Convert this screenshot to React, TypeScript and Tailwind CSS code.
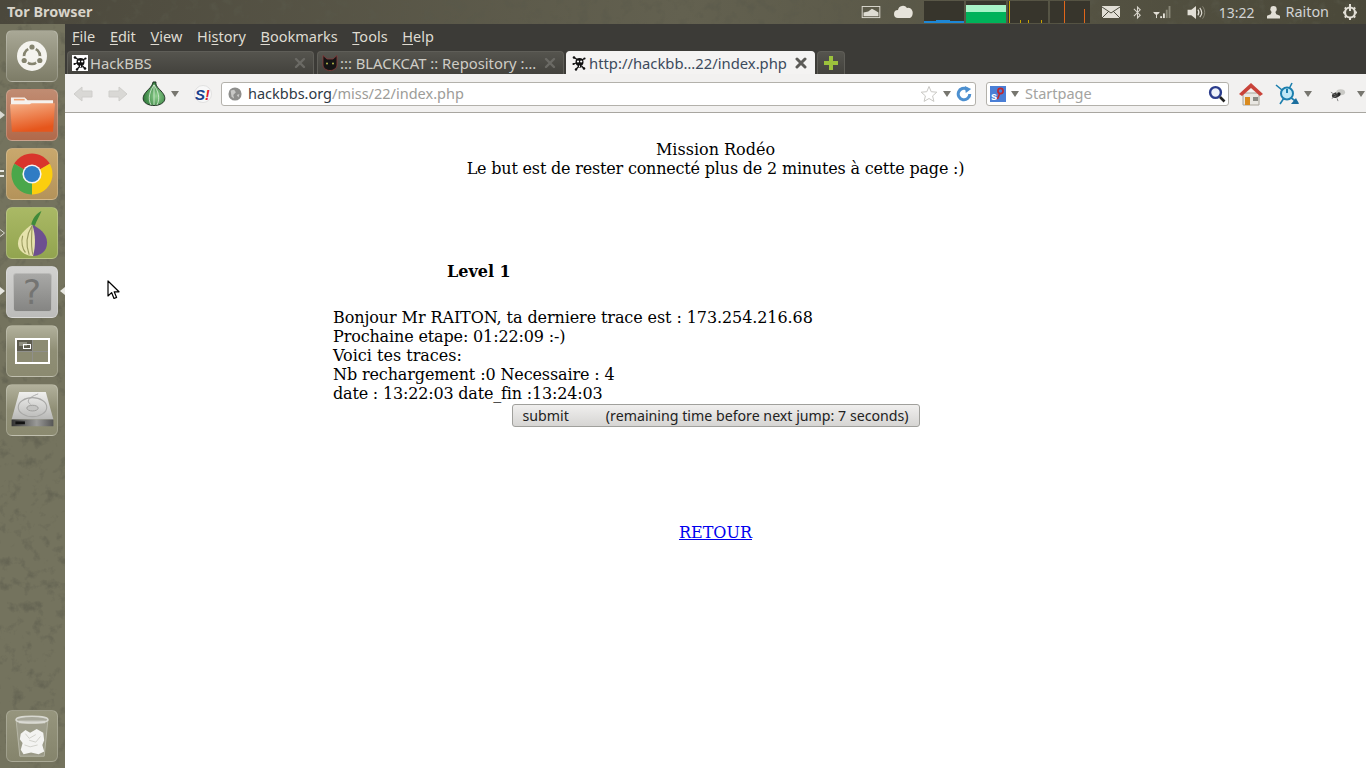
// App.tsx
// Ubuntu Unity desktop with Tor Browser open on a hackbbs mission page.

function Skull({ className = "", plain = false }: { className?: string; plain?: boolean }) {
  return (
    <svg viewBox="0 0 16 16" className={className}>
      {!plain && <rect width="16" height="16" fill="#fff" />}
      <g fill="#111">
        <circle cx="8.5" cy="7" r="4" />
        <rect x="6.8" y="10" width="3.6" height="2.6" />
        <circle cx="3" cy="2.5" r="1.3" />
        <circle cx="13.5" cy="3.5" r="1.1" />
        <circle cx="2.5" cy="9" r="1.1" />
        <circle cx="5" cy="14.5" r="1.2" />
        <circle cx="13" cy="13.5" r="1.3" />
        <path d="M3 2.5L7 5M13.5 3.5L11 5M2.5 9L5 8M5 14.5L7 12M13 13.5L10.5 11" stroke="#111" strokeWidth="1.3" />
      </g>
      <circle cx="7" cy="6.5" r="1.1" fill="#fff" />
      <circle cx="10.2" cy="6.5" r="1.1" fill="#fff" />
      <rect x="8" y="10.5" width="1" height="1.6" fill="#fff" />
    </svg>
  );
}

function CatIcon() {
  return (
    <svg viewBox="0 0 16 16" className="w-[16px] h-[16px] shrink-0">
      <path d="M1 .5L5 4H11L15 .5V10C15 13 12 15.5 8 15.5S1 13 1 10Z" fill="#151515" stroke="#8a3a3a" strokeWidth=".8" />
      <circle cx="5" cy="8.5" r="1" fill="#b5b84a" />
      <circle cx="11" cy="8.5" r="1" fill="#b5b84a" />
    </svg>
  );
}

function Close({ active = false }: { active?: boolean }) {
  return (
    <svg viewBox="0 0 12 12" className="w-[12px] h-[12px] shrink-0">
      <path
        d="M2 2L10 10M10 2L2 10"
        stroke={active ? "#5c5b57" : "#6b6a65"}
        strokeWidth={active ? 3 : 2.4}
        strokeLinecap="round"
      />
    </svg>
  );
}

function Caret({ color = "#77766f" }: { color?: string }) {
  return (
    <svg viewBox="0 0 8 6" className="w-[8px] h-[6px] shrink-0">
      <path d="M0 0H8L4 6Z" fill={color} />
    </svg>
  );
}

function Tab({
  width,
  active = false,
  label,
  icon,
}: {
  width: string;
  active?: boolean;
  label: string;
  icon: React.ReactNode;
}) {
  return (
    <div
      className={`${width} h-[23px] flex items-center gap-[2px] pl-[4px] pr-[7px] rounded-t-[4px] border border-b-0 text-[14.8px] ${
        active
          ? "bg-[#f4f3f2] border-[#f4f3f2] text-[#3c4a5c]"
          : "bg-gradient-to-b from-[#55544e] to-[#43423d] border-[#5f5e58] text-[#cfcdc6]"
      }`}
    >
      {icon}
      <span className="flex-1 truncate whitespace-nowrap">{label}</span>
      <Close active={active} />
    </div>
  );
}

function Tile({ className, children }: { className: string; children: React.ReactNode }) {
  return (
    <div className={`relative w-[52px] h-[52px] ml-[6px] rounded-[6px] flex items-center justify-center border border-white/20 ${className}`}>
      {children}
    </div>
  );
}

// speckled wallpaper showing through the launcher and the panel
function Grain({ id }: { id: string }) {
  return (
    <svg className="absolute inset-0 w-full h-full pointer-events-none">
      <filter id={id}>
        <feTurbulence type="fractalNoise" baseFrequency="0.09" numOctaves="4" seed="4" />
        <feColorMatrix values="0 0 0 0 0.1  0 0 0 0 0.1  0 0 0 0 0.07  0 0 0 3.2 -1.7" />
      </filter>
      <rect width="100%" height="100%" filter={`url(#${id})`} opacity="0.55" />
    </svg>
  );
}

function Launcher() {
  return (
    <div className="w-[65px] shrink-0 flex flex-col gap-[7px] pt-[6px] pb-[6px] bg-[#74735e] relative">
      <Grain id="launcher-grain" />
      <Tile className="bg-gradient-to-b from-[#a9a896] to-[#7d7c67]">
        <svg viewBox="0 0 30 30" className="w-[30px] h-[30px]">
          <circle cx="15" cy="15" r="15" fill="#f4f3ee" />
          <circle cx="15" cy="15" r="8" fill="none" stroke="#85846f" strokeWidth="2.6" />
          <circle cx="15" cy="6" r="4.4" fill="#f4f3ee" />
          <circle cx="7.2" cy="19.5" r="4.4" fill="#f4f3ee" />
          <circle cx="22.8" cy="19.5" r="4.4" fill="#f4f3ee" />
          <circle cx="15" cy="6" r="2.6" fill="#85846f" />
          <circle cx="7.2" cy="19.5" r="2.6" fill="#85846f" />
          <circle cx="22.8" cy="19.5" r="2.6" fill="#85846f" />
        </svg>
      </Tile>
      <Tile className="bg-gradient-to-b from-[#c08c72] to-[#b1694a]">
        <svg viewBox="0 0 46 38" className="w-[45px] h-[38px]">
          <defs>
            <linearGradient id="folder-front" x1="0" y1="0" x2="0.3" y2="1">
              <stop offset="0" stopColor="#f5b188" />
              <stop offset="1" stopColor="#e6561c" />
            </linearGradient>
          </defs>
          <path d="M1 1H15L18 4H44V12H1Z" fill="#f5f2ee" />
          <rect x="4" y="2.5" width="11" height="1.6" fill="#eda070" />
          <path d="M0 8H20L22 7H46L44 36H2Z" fill="url(#folder-front)" />
        </svg>
      </Tile>
      <Tile className="bg-gradient-to-b from-[#c9a86d] to-[#b4935a]">
        <svg viewBox="0 0 42 42" className="w-[42px] h-[42px]">
          <path d="M21 21L3.25 10.75A20.5 20.5 0 0 1 38.75 10.75Z" fill="#d9352c" />
          <path d="M21 21L38.75 10.75A20.5 20.5 0 0 1 21 41.5Z" fill="#fbce0e" />
          <path d="M21 21L21 41.5A20.5 20.5 0 0 1 3.25 10.75Z" fill="#4aa74a" />
          <circle cx="21" cy="21" r="9.6" fill="#f4f4f4" />
          <circle cx="21" cy="21" r="8" fill="#2f7cc4" />
        </svg>
      </Tile>
      <Tile className="bg-gradient-to-b from-[#aab965] to-[#92a44f]">
        <svg viewBox="3 1 33 42" preserveAspectRatio="none" className="w-[31px] h-[47px]">
          <path d="M18 15C19 9 24 4 29 2C27 7 24 10 22 15Z" fill="#3f8a3a" />
          <path d="M19 14C26 17 35 22 35 30C35 38 28 42 20 42Z" fill="#6d4f90" />
          <path d="M19 14C12 18 4 24 4 31C4 38 12 42 20 42C23 34 23 22 19 14Z" fill="#e6e3ac" />
          <path d="M19 15C14 22 11 30 16 41M19 15C19 24 17 32 20 41M9 24C7 30 9 36 12 39" fill="none" stroke="#9a9a5e" strokeWidth="1.2" />
        </svg>
      </Tile>
      <Tile className="bg-gradient-to-b from-[#d2d2d0] to-[#bcbcba]">
        <div className="w-[39px] h-[39px] rounded-[3px] bg-gradient-to-b from-[#a8a8a6] to-[#858583] border border-[#bbbbb9] flex items-center justify-center text-[34px] text-[#747472] [font-family:'DejaVu_Sans',sans-serif]">
          ?
        </div>
      </Tile>
      <Tile className="bg-gradient-to-b from-[#b2b19c] via-[#8f8e75] to-[#8b8a70]">
        <div className="w-[35px] h-[26px] border-[2px] border-white grid grid-cols-2 grid-rows-2 gap-px bg-[#8f8f8a]">
          <div className="bg-[#5e5c4f] relative">
            <div className="absolute left-[2px] top-[2px] w-[8px] h-[4px] bg-[#8f8e80]" />
            <div className="absolute left-[6px] top-[4px] w-[8px] h-[5px] border border-white" />
          </div>
          <div className="bg-[#8c8b72]" />
          <div className="bg-[#8c8b72]" />
          <div className="bg-[#8c8b72]" />
        </div>
      </Tile>
      <Tile className="bg-gradient-to-b from-[#b2b19c] via-[#8f8e75] to-[#8b8a70]">
        <svg viewBox="0 0 48 40" className="w-[47px] h-[38px]">
          <defs>
            <linearGradient id="disk-top" x1="0" y1="0" x2="0" y2="1">
              <stop offset="0" stopColor="#f0f0ee" />
              <stop offset="1" stopColor="#b8b8b6" />
            </linearGradient>
            <linearGradient id="disk-front" x1="0" y1="0" x2="1" y2="0">
              <stop offset="0" stopColor="#333" />
              <stop offset="0.6" stopColor="#9a9a98" />
              <stop offset="1" stopColor="#555" />
            </linearGradient>
          </defs>
          <path d="M10 1H38L46 30H2Z" fill="url(#disk-top)" />
          <path d="M2 30H46V37H2Z" fill="url(#disk-front)" />
          <rect x="6" y="32" width="10" height="3" fill="#111" />
          <ellipse cx="24" cy="17" rx="15" ry="10" fill="none" stroke="#a8a8a6" strokeWidth="1.2" />
          <ellipse cx="24" cy="18" rx="6" ry="3" fill="#c4c4c2" stroke="#9c9c9a" />
          <path d="M30 3C22 6 16 10 22 14" fill="none" stroke="#a8a8a6" />
        </svg>
      </Tile>
      <Tile className="mt-auto bg-gradient-to-b from-[#96957d] to-[#85846c]">
        <svg viewBox="0 0 40 48" className="w-[38px] h-[45px]">
          <path d="M3 6L7 45H33L37 6Z" fill="#a6a698" fillOpacity=".6" stroke="#b8b7a8" />
          <ellipse cx="20" cy="6" rx="17" ry="3.6" fill="#a8a89a" stroke="#d8d8d0" strokeWidth="1.6" />
          <rect x="6" y="7" width="28" height="3" fill="#dcdcd6" fillOpacity=".7" />
          <path d="M8 21L13 17L18 20L25 16L32 20L33 28L31 33L33 40L27 43L19 41L11 43L8 38L10 31L7 27Z" fill="#f3f3f1" />
          <path d="M13 21L17 26L24 22M29 24L24 30L17 28M12 33L18 35L26 33" fill="none" stroke="#cfcfc9" />
        </svg>
      </Tile>
      {/* running-app pips */}
      <div className="absolute left-0 top-[87px] w-0 h-0 border-y-[4px] border-y-transparent border-l-[5px] border-l-[#d9d9d2]" />
      <div className="absolute left-0 top-[146px] w-[4px] h-[2px] bg-[#e6e6e0]" />
      <div className="absolute left-0 top-[151px] w-[4px] h-[2px] bg-[#e6e6e0]" />
      <svg viewBox="0 0 5 8" className="absolute left-0 top-[205px] w-[5px] h-[8px]">
        <path d="M0 .5L4.5 4L0 7.5" fill="none" stroke="#d9d9d2" />
      </svg>
      <div className="absolute left-0 top-[263px] w-0 h-0 border-y-[4px] border-y-transparent border-l-[5px] border-l-[#e6e6e0]" />
      <div className="absolute right-0 top-[263px] w-0 h-0 border-y-[4px] border-y-transparent border-r-[5px] border-r-[#e6e6e0]" />
    </div>
  );
}

function Graph({ children, className = "" }: { children: React.ReactNode; className?: string }) {
  return <div className={`w-[40px] h-[22px] bg-[#37352c] relative overflow-hidden ${className}`}>{children}</div>;
}

function TopBar() {
  return (
    <div className="relative h-[24px] shrink-0 flex items-center pl-[7px] pr-[8px] bg-gradient-to-r from-[#4b483c] via-[#636150] to-[#4a4839] text-[#dfdbd2] text-[14px]">
      <Grain id="panel-grain" />
      <span className="relative font-bold text-[14.4px] text-[#d8d4ca]">Tor Browser</span>
      <div className="relative ml-auto flex items-center">
        <svg viewBox="0 0 20 14" className="w-[20px] h-[13px] mr-[13px]">
          <rect x=".5" y=".5" width="19" height="12" fill="none" stroke="#dedcd3" />
          <path d="M2 7L7 6L11 3L15 5L18 7V11H2Z" fill="#dedcd3" />
        </svg>
        <svg viewBox="0 0 20 14" className="w-[20px] h-[14px] mr-[10px]">
          <path d="M4 13A4 4 0 0 1 4 5A5 5 0 0 1 13 3A4 5 0 0 1 16 13Z" fill="#e6e3da" />
        </svg>
        <Graph className="mr-[2px]">
          <div className="absolute left-0 right-0 bottom-0 h-[2px] bg-[#1d87d6]" />
          <div className="absolute left-[12px] bottom-[2px] h-px w-[14px] bg-[#1d87d6]" />
        </Graph>
        <div className="w-[40px] h-[22px] bg-[#00b25a] relative mr-[2px]">
          <div className="absolute left-0 right-0 top-0 h-[4px] bg-[#37352c]" />
          <div className="absolute left-0 right-0 top-[4px] h-[7px] bg-[#a8f3c7]" />
        </div>
        <Graph className="mr-[2px]">
          <div className="absolute left-[1px] top-0 bottom-0 w-px bg-[#c9a400]" />
          <div className="absolute left-[12px] bottom-0 h-[3px] w-px bg-[#c9a400]" />
          <div className="absolute left-[20px] bottom-0 h-[3px] w-px bg-[#c9a400]" />
          <div className="absolute left-[33px] bottom-0 h-[3px] w-px bg-[#c9a400]" />
        </Graph>
        <Graph>
          <div className="absolute left-[14px] top-0 bottom-0 w-px bg-[#e0661a]" />
          <div className="absolute left-[34px] bottom-0 h-[14px] w-px bg-[#e0661a]" />
        </Graph>
        <svg viewBox="0 0 18 12" className="w-[18px] h-[12px] ml-[12px]">
          <rect width="18" height="12" fill="#e2dfd6" />
          <path d="M0 1L9 7L18 1M0 12L7 5M18 12L11 5" fill="none" stroke="#4b4a3d" />
        </svg>
        <svg viewBox="0 0 10 16" className="w-[9px] h-[15px] ml-[13px]">
          <path d="M1 4L8 11L5 14V2L8 5L1 12" fill="none" stroke="#d8d5cc" strokeWidth="1.2" />
        </svg>
        <svg viewBox="0 0 20 14" className="w-[20px] h-[13px] ml-[11px]">
          <path d="M0 7H6L3 9.5ZM3 9V13" stroke="#e6e3da" fill="#e6e3da" />
          <rect x="7" y="11" width="2" height="2" fill="#e6e3da" />
          <rect x="10" y="8" width="2" height="5" fill="#e6e3da" />
          <rect x="13" y="4" width="2" height="9" fill="#8a8878" />
          <rect x="16" y="0" width="2" height="13" fill="#8a8878" />
        </svg>
        <svg viewBox="0 0 20 16" className="w-[20px] h-[15px] ml-[13px]">
          <path d="M1 5H5L10 1V15L5 11H1Z" fill="#e2dfd6" />
          <path d="M12 5C13.5 7 13.5 9 12 11M14 3C16.5 6 16.5 10 14 13" fill="none" stroke="#e2dfd6" strokeWidth="1.2" />
          <path d="M17 1.5C20 5.5 20 10.5 17 14.5" fill="none" stroke="#8a8878" />
        </svg>
        <span className="ml-[13px] text-[#d2d3d3]">13:22</span>
        <svg viewBox="0 0 14 14" className="w-[13px] h-[14px] ml-[13px]">
          <circle cx="7" cy="4" r="3.4" fill="#e2dfd6" />
          <path d="M5 7H9L10 9.5L14 11V14H0V11L4 9.5Z" fill="#e2dfd6" />
        </svg>
        <span className="ml-[5px] text-[#d2d3d3] text-[14.4px]">Raiton</span>
        <svg viewBox="0 0 16 16" className="w-[16px] h-[16px] ml-[13px]">
          <circle cx="8" cy="8.5" r="5" fill="none" stroke="#e2dfd6" strokeWidth="2.2" />
          <path d="M8 0V7" stroke="#e2dfd6" strokeWidth="2" />
          <path d="M8 13V16M1 8.5H3.5M12.5 8.5H15M2.8 3.5L4.6 5.2M13.2 3.5L11.4 5.2M2.8 13.5L4.6 11.8M13.2 13.5L11.4 11.8" stroke="#e2dfd6" strokeWidth="2" />
        </svg>
      </div>
    </div>
  );
}

function Menu() {
  const items: [string, string, string][] = [
    ["", "F", "ile"],
    ["", "E", "dit"],
    ["", "V", "iew"],
    ["Hi", "s", "tory"],
    ["", "B", "ookmarks"],
    ["", "T", "ools"],
    ["", "H", "elp"],
  ];
  return (
    <div className="h-[26px] flex items-center gap-[14.7px] pl-[7px] bg-[#3c3b37] text-[#dfdbd2] text-[14.5px]">
      {items.map(([a, u, b]) => (
        <span key={a + u + b}>
          {a}
          <span className="underline underline-offset-2">{u}</span>
          {b}
        </span>
      ))}
    </div>
  );
}

function NavBar() {
  return (
    <div className="h-[39px] shrink-0 flex items-center bg-[#f2f1f0] border-b border-[#a8a6a0] pt-[1px]">
      <svg viewBox="0 0 24 20" className="w-[24px] h-[20px] ml-[6px]">
        <path d="M11 3L3 10L11 17V13H21V7H11Z" fill="#d9d8d5" stroke="#cfcecb" strokeLinejoin="round" />
      </svg>
      <svg viewBox="0 0 24 20" className="w-[24px] h-[20px] ml-[11px]">
        <path d="M13 3L21 10L13 17V13H3V7H13Z" fill="#d9d8d5" stroke="#cfcecb" strokeLinejoin="round" />
      </svg>
      <svg viewBox="0 0 24 26" className="w-[24px] h-[25px] ml-[12px]">
        <defs>
          <radialGradient id="onion" cx="0.6" cy="0.6" r="0.6">
            <stop offset="0" stopColor="#8fd08e" />
            <stop offset="1" stopColor="#2f7a3a" />
          </radialGradient>
        </defs>
        <path d="M11 1H14C13.5 4 15 6 18 9C22 13 24 16 23 20C21.5 24 16 25.5 12 25.5C8 25.5 2.5 24 1 20C0 16 2 13 6 9C9 6 10.5 4 11 1Z" fill="url(#onion)" stroke="#1f2f22" strokeWidth="1" />
        <path d="M12 4C8 10 5 18 9 25M12 4V25M12 4C16 10 19 18 15 25" fill="none" stroke="#e2f2e0" strokeWidth=".8" />
      </svg>
      <div className="ml-[5px]">
        <Caret />
      </div>
      <svg viewBox="0 0 18 18" className="w-[18px] h-[18px] ml-[15px]">
        <circle cx="9" cy="9" r="8.5" fill="#f8f8f8" stroke="#d4d4d4" strokeWidth=".6" />
        <text x="1" y="14.5" fontSize="15" fontWeight="700" fontStyle="italic" fill="#1a3f8c" fontFamily="Liberation Sans">S</text>
        <text x="11" y="14.5" fontSize="14" fontWeight="700" fontStyle="italic" fill="#e0202a" fontFamily="Liberation Sans">!</text>
      </svg>
      <div className="w-[755px] h-[24px] ml-[9px] flex items-center bg-white border border-[#b3b1ab] rounded-[3px] pl-[6px] pr-[3px] text-[14.5px]">
        <svg viewBox="0 0 16 16" className="w-[14px] h-[14px] mr-[6px]">
          <circle cx="8" cy="8" r="7.5" fill="#8e8e8c" />
          <path d="M3 4L7 3L9 6L6 9L7 13L4 11ZM10 9L13 8L12 12Z" fill="#c9c9c7" />
        </svg>
        <span className="text-[#2f3a45]">hackbbs.org</span>
        <span className="text-[#9c9c98]">/miss/22/index.php</span>
        <div className="ml-auto flex items-center">
          <svg viewBox="0 0 18 18" className="w-[18px] h-[18px]">
            <path d="M9 1.5L11.2 6.7L16.8 7.2L12.6 10.9L13.9 16.4L9 13.5L4.1 16.4L5.4 10.9L1.2 7.2L6.8 6.7Z" fill="#fff" stroke="#c9c8c4" />
          </svg>
          <div className="ml-[5px]">
            <Caret />
          </div>
          <svg viewBox="0 0 18 18" className="w-[16px] h-[16px] ml-[5px]">
            <path d="M15.5 9A6.5 6.5 0 1 1 12.5 3.5" fill="none" stroke="#4d90d0" strokeWidth="3.4" />
            <path d="M10 0L17 3.5L11 8Z" fill="#4d90d0" />
          </svg>
        </div>
      </div>
      <div className="w-[243px] h-[24px] ml-[10px] flex items-center bg-white border border-[#b3b1ab] rounded-[3px] pl-[3px] pr-[2px] text-[14.5px]">
        <svg viewBox="0 0 16 16" className="w-[16px] h-[16px]">
          <rect width="16" height="16" fill="#4a7fd6" />
          <circle cx="10.5" cy="5" r="2.6" fill="none" stroke="#c0262d" strokeWidth="1.6" />
          <path d="M9.5 8L7.5 13" stroke="#c0262d" strokeWidth="1.6" />
          <text x="1" y="14" fontSize="11" fontWeight="700" fill="#fff" fontFamily="Liberation Sans">s</text>
        </svg>
        <div className="ml-[5px]">
          <Caret />
        </div>
        <span className="ml-[6px] text-[#a3a3a0]">Startpage</span>
        <svg viewBox="0 0 18 18" className="w-[18px] h-[18px] ml-auto">
          <circle cx="7.5" cy="7.5" r="5.4" fill="#eef2fa" stroke="#2a3c8c" strokeWidth="2.4" />
          <path d="M12 12L16.5 16.5" stroke="#222" strokeWidth="2.6" />
        </svg>
      </div>
      <svg viewBox="0 0 24 24" className="w-[24px] h-[24px] ml-[10px]">
        <path d="M4 11H20V23H4Z" fill="#e9e7e2" stroke="#a8a49a" />
        <path d="M12 1L24 12L21 14L12 6L3 14L0 12Z" fill="#c9433a" />
        <rect x="6" y="15" width="5" height="8" fill="#d98a1e" />
        <rect x="14" y="15" width="5" height="4" fill="#8a8a84" />
      </svg>
      <svg viewBox="0 0 24 24" className="w-[24px] h-[24px] ml-[12px]">
        <path d="M1 3L7 8M17 1L14 7M5 22L9 16M23 21L15 15" stroke="#1c7fae" strokeWidth="1.6" />
        <path d="M24 22L16 22L21 16Z" fill="#1c6f9e" />
        <circle cx="12" cy="11.5" r="6" fill="#bfe8f6" stroke="#1c7fae" strokeWidth="2" />
        <rect x="11" y="7" width="2" height="4" fill="#1c7fae" />
      </svg>
      <div className="ml-[5px]">
        <Caret />
      </div>
      <svg viewBox="0 0 20 18" className="w-[18px] h-[16px] ml-[17px]">
        <ellipse cx="8" cy="10" rx="5" ry="3" fill="#3a3a38" transform="rotate(-20 8 10)" />
        <ellipse cx="13" cy="7" rx="5" ry="3.4" fill="#c9c9c5" />
        <circle cx="11" cy="9" r="2" fill="#222" />
        <path d="M2 7L7 10M3 14L8 11M9 14L10 17" stroke="#777" />
      </svg>
      <div className="ml-[10px]">
        <Caret />
      </div>
    </div>
  );
}

function Cursor() {
  return (
    <svg viewBox="0 0 13 20" className="absolute left-[42px] top-[167px] w-[13px] h-[20px]">
      <path d="M1 1V16L4.6 12.6L7 18.5L9.6 17.4L7.2 11.8H12Z" fill="#fff" stroke="#000" strokeWidth="1.2" strokeLinejoin="round" />
    </svg>
  );
}

export default function App() {
  return (
    <div className="w-[1366px] h-[768px] overflow-hidden flex flex-col [font-family:'Noto_Sans',sans-serif]">
      <TopBar />
      <div className="flex-1 flex min-h-0">
        <Launcher />
        <div className="flex-1 flex flex-col min-w-0">
          <Menu />
          <div className="h-[24px] shrink-0 flex items-end gap-[2px] pl-[2px] bg-[#3c3b37]">
            <Tab width="w-[247px] mr-[1px]" label="HackBBS" icon={<Skull className="w-[16px] h-[16px] shrink-0" />} />
            <Tab width="w-[247px]" label="::: BLACKCAT :: Repository :…" icon={<CatIcon />} />
            <Tab width="w-[249px]" active label="http://hackbb…22/index.php" icon={<Skull plain className="w-[16px] h-[16px] shrink-0" />} />
            <div className="w-[28px] h-[23px] flex items-center justify-center rounded-t-[4px] border border-b-0 border-[#5f5e58] bg-gradient-to-b from-[#55544e] to-[#43423d]">
              <svg viewBox="0 0 16 16" className="w-[16px] h-[16px]">
                <path d="M6 1H10V6H15V10H10V15H6V10H1V6H6Z" fill="#9cc23c" />
              </svg>
            </div>
          </div>
          <NavBar />
          <div className="flex-1 relative bg-white text-black text-[16px] leading-[19px] [font-family:'DejaVu_Serif',serif]">
            <Cursor />
            <div className="pt-[27px] text-center">
              <p>Mission Rodéo</p>
              <p className="tracking-[-0.19px]">Le but est de rester connecté plus de 2 minutes à cette page :)</p>
            </div>
            <p className="mt-[84px] pl-[382px] font-bold">Level 1</p>
            <div className="mt-[27px] pl-[268px]">
              <p className="tracking-[-0.09px]">Bonjour Mr RAITON, ta derniere trace est : 173.254.216.68</p>
              <p className="tracking-[-0.14px]">Prochaine etape: 01:22:09 :-)</p>
              <p>Voici tes traces:</p>
              <p className="tracking-[-0.12px]">Nb rechargement :0 Necessaire : 4</p>
              <p className="tracking-[-0.18px]">date : 13:22:03 date_fin :13:24:03</p>
            </div>
            <div className="flex justify-center mt-[1px]">
              <button className="w-[408px] h-[23px] flex items-center pl-[10px] rounded-[3px] border border-[#a0a09c] bg-gradient-to-b from-[#f0efee] to-[#d6d5d3] text-[#222] text-[14.2px] [font-family:'Noto_Sans',sans-serif] whitespace-nowrap">
                <span>submit</span>
                <span className="ml-[37px]">(remaining time before next jump: 7 seconds)</span>
              </button>
            </div>
            <p className="mt-[96px] text-center">
              <a className="text-[#0000ee] underline">RETOUR</a>
            </p>
          </div>
        </div>
      </div>
    </div>
  );
}
